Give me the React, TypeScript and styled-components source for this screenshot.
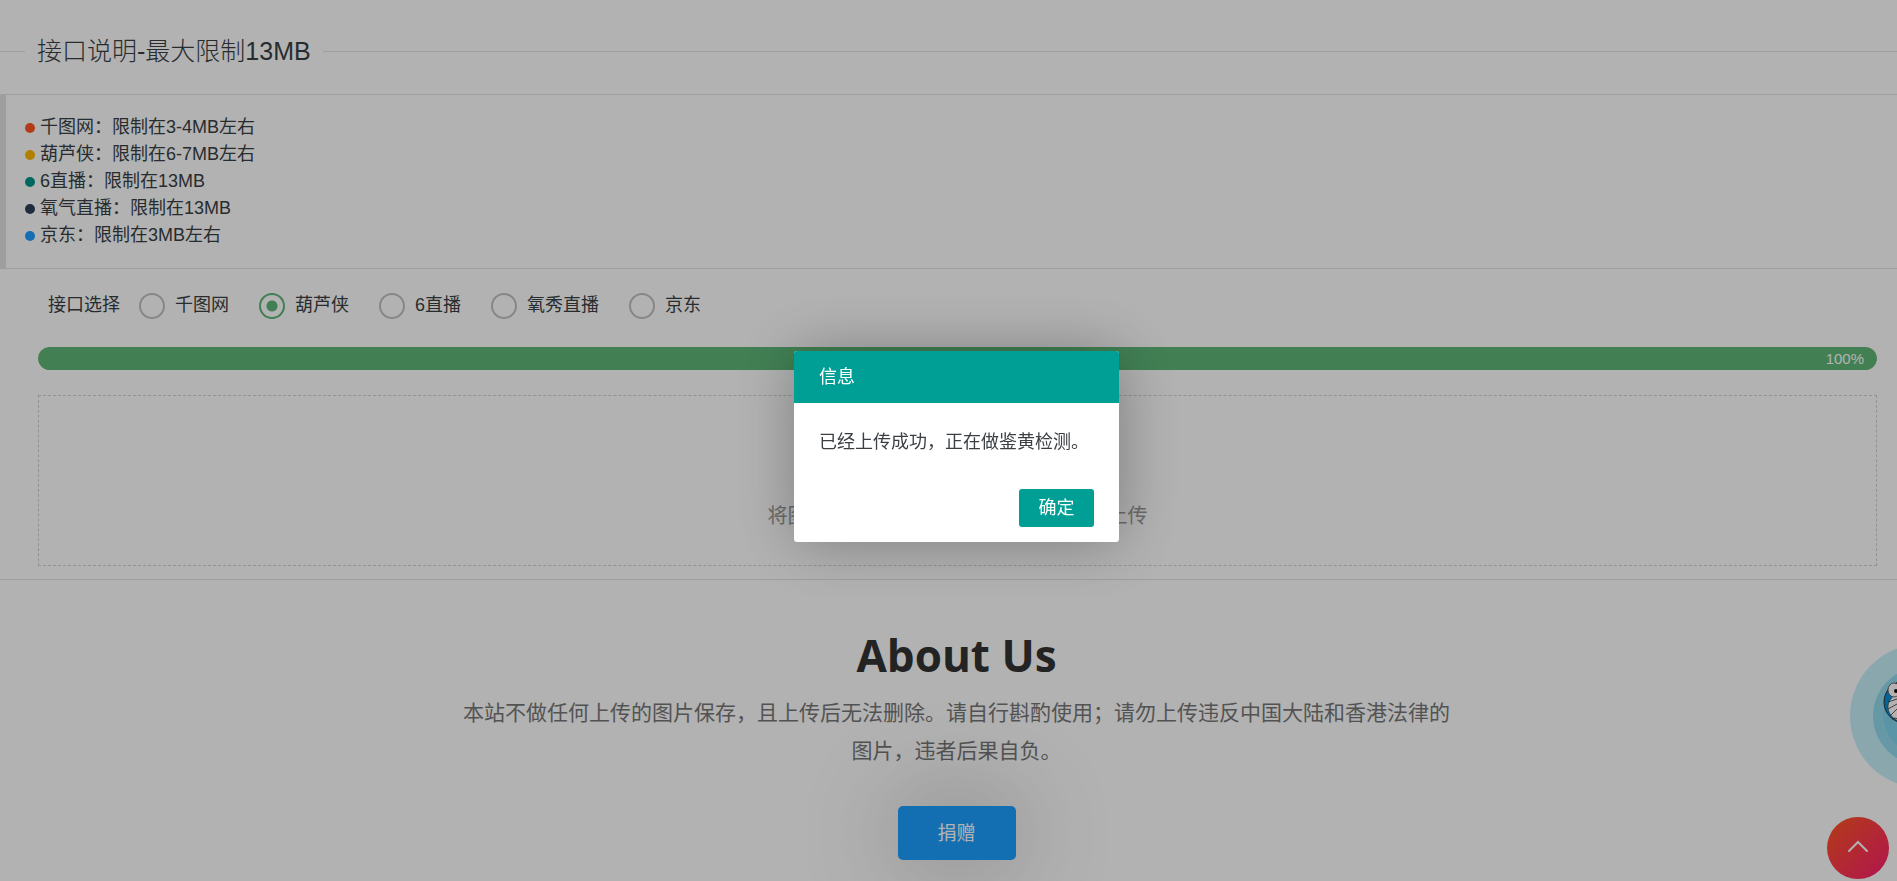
import React, { useState } from "react";
import styled, { createGlobalStyle } from "styled-components";
import { CloudUpload } from "lucide-react";

const sans = `"Liberation Sans", "Noto Sans CJK SC", sans-serif`;
const rich = `"Open Sans", "Noto Sans CJK SC", sans-serif`;
const line = "#e2e2e2";

const GlobalStyle = createGlobalStyle`
  *, *::before, *::after { box-sizing: border-box; }
  body {
    margin: 0;
    background: #fff;
    color: #3a3f44;
    font: 400 18px/27px ${sans};
    overflow: hidden;
  }
  h1, h2, p, ul { margin: 0; padding: 0; }
  button, input { font: inherit; margin: 0; }
`;

const Page = styled.main`
  position: relative;
  min-height: 100vh;
`;

const SectionTitle = styled.h1`
  display: flex;
  align-items: center;
  gap: 12px;
  height: 94px;
  padding-top: 8px;
  && {
    font-size: 25px;
    font-weight: 300;
  }
  line-height: 38px;
  white-space: nowrap;

  &::before, &::after {
    content: "";
    width: 25px;
    height: 1px;
    background: ${line};
  }
  &::after { flex: 1; }
`;

const Notes = styled.ul`
  list-style: none;
  border: 1px solid ${line};
  border-width: 1px 0 1px 6px;
  && { padding: 19px; }
`;

const Note = styled.li<{ $color: string }>`
  display: flex;
  align-items: center;
  gap: 5px;

  &::before {
    content: "";
    width: 10px;
    height: 10px;
    border-radius: 50%;
    background: ${(p) => p.$color};
  }
`;

const Form = styled.form`
  padding: 20px 20px 13px 38px;
  border-bottom: 1px solid ${line};
`;

const Choices = styled.div`
  display: flex;
  align-items: center;
  gap: 30px;
  height: 33px;
  margin-bottom: 25px;
  padding-left: 10px;
`;

const ChoicesLabel = styled.span`
  margin-right: -11px;
`;

const Choice = styled.label`
  display: flex;
  align-items: center;
  gap: 10px;
  cursor: pointer;
`;

const Radio = styled.input`
  appearance: none;
  width: 26px;
  height: 26px;
  border: 2px solid #c2c2c2;
  border-radius: 50%;
  cursor: pointer;

  &:checked {
    border-color: #5fb878;
    background: radial-gradient(circle, #5fb878 5px, transparent 6px);
  }
`;

const Progress = styled.div`
  height: 23px;
  margin-bottom: 25px;
  border-radius: 12px;
  background: ${line};
  overflow: hidden;
`;

const ProgressFill = styled.div`
  height: 100%;
  padding-right: 13px;
  border-radius: 12px;
  background: #5fb878;
  color: #fff;
  font-size: 15px;
  line-height: 23px;
  text-align: right;
`;

const DropZone = styled.button`
  display: flex;
  flex-direction: column;
  align-items: center;
  gap: 8px;
  width: 100%;
  padding: 37px 37px 36px;
  border: 1px dashed #d2d2d2;
  background: #fff;
  color: #999;
  font-size: 20px;
  line-height: 26px;
  cursor: pointer;

  svg { color: #009688; }
`;

const About = styled.section`
  display: flex;
  flex-direction: column;
  align-items: center;
  padding: 42px 20px 40px 36px;
  font-family: ${rich};
  text-align: center;
`;

const AboutTitle = styled.h2`
  color: #333;
  font-size: 44px;
  line-height: 66px;
`;

const AboutText = styled.p`
  && { margin: 5px 0 37px; }
  max-width: 1000px;
  color: #777;
  font-size: 21px;
  line-height: 38px;
`;

const Donate = styled.button`
  width: 118px;
  height: 54px;
  border: 0;
  border-radius: 5px;
  background: #1e9fff;
  box-shadow: 0 0 100px rgba(0, 0, 0, 0.3);
  color: #fff;
  font-size: 19px;
  cursor: pointer;
`;

const Mascot = styled.svg`
  position: fixed;
  right: -97px;
  bottom: 93px;
  width: 144px;
  height: 144px;
`;

const ToTop = styled.button`
  position: fixed;
  right: 8px;
  bottom: 2px;
  display: flex;
  align-items: center;
  justify-content: center;
  width: 62px;
  height: 62px;
  padding: 0 0 4px;
  border: 0;
  border-radius: 50%;
  background: linear-gradient(135deg, #ff5722, #ff1e70);
  cursor: pointer;
`;

const Shade = styled.div`
  position: fixed;
  inset: 0;
  display: flex;
  align-items: center;
  justify-content: center;
  padding: 12px 0 0 16px;
  background: rgba(0, 0, 0, 0.3);
`;

const Dialog = styled.div`
  width: 325px;
  border-radius: 3px;
  background: #fff;
  box-shadow: 1px 1px 62px rgba(0, 0, 0, 0.3);
  overflow: hidden;
`;

const DialogTitle = styled.h2`
  && {
    padding: 0 25px;
    font-size: 18px;
    font-weight: 400;
  }
  background: #009f95;
  color: #fff;
  line-height: 52px;
`;

const DialogText = styled.p`
  && { padding: 26px 25px 33px; }
  white-space: nowrap;
`;

const DialogActions = styled.div`
  display: flex;
  justify-content: flex-end;
  padding: 0 25px 15px;
`;

const Confirm = styled.button`
  width: 75px;
  height: 38px;
  padding: 0;
  border: 0;
  border-radius: 3px;
  background: #009f95;
  color: #fff;
  cursor: pointer;
`;

const notes = [
  { color: "#ff5722", text: "千图网：限制在3-4MB左右" },
  { color: "#ffb800", text: "葫芦侠：限制在6-7MB左右" },
  { color: "#009688", text: "6直播：限制在13MB" },
  { color: "#2f4056", text: "氧气直播：限制在13MB" },
  { color: "#1e9fff", text: "京东：限制在3MB左右" },
];

const sources = ["千图网", "葫芦侠", "6直播", "氧秀直播", "京东"];

export default function App() {
  const [source, setSource] = useState("葫芦侠");
  const [open, setOpen] = useState(true);
  const progress = 100;

  return (
    <Page>
      <GlobalStyle />
      <SectionTitle>接口说明-最大限制13MB</SectionTitle>
      <Notes>
        {notes.map((n) => (
          <Note key={n.text} $color={n.color}>{n.text}</Note>
        ))}
      </Notes>

      <Form>
        <Choices role="radiogroup" aria-labelledby="source-label">
          <ChoicesLabel id="source-label">接口选择</ChoicesLabel>
          {sources.map((s) => (
            <Choice key={s}>
              <Radio type="radio" name="source" checked={source === s} onChange={() => setSource(s)} />
              {s}
            </Choice>
          ))}
        </Choices>
        <Progress>
          <ProgressFill style={{ width: `${progress}%` }}>{progress}%</ProgressFill>
        </Progress>
        <DropZone type="button">
          <CloudUpload size={62} />
          将图片拖拽到此处，或者点击此处进行上传
        </DropZone>
      </Form>

      <About>
        <AboutTitle>About Us</AboutTitle>
        <AboutText>
          本站不做任何上传的图片保存，且上传后无法删除。请自行斟酌使用；请勿上传违反中国大陆和香港法律的图片，违者后果自负。
        </AboutText>
        <Donate type="button">捐赠</Donate>
      </About>

      <Mascot viewBox="0 0 144 144" aria-hidden="true">
        <circle cx="72" cy="72" r="72" fill="#c8f0fa" />
        <circle cx="72" cy="72" r="49" fill="#93daed" />
        <circle cx="75" cy="70" r="42" fill="#82d6f0" />
        <circle cx="55" cy="58" r="21" fill="#0a8fdc" stroke="#333" />
        <ellipse cx="58" cy="63" rx="20" ry="16" fill="#fff" stroke="#333" strokeWidth="0.5" />
        <ellipse cx="44" cy="46" rx="6" ry="7" fill="#fff" stroke="#333" strokeWidth="0.7" />
        <circle cx="46" cy="47" r="2" fill="#111" />
        <g fill="none" stroke="#333" strokeWidth="0.8">
          <path d="M38 58l9-3M38 65l9-5M41 71l6-6M42 75q3-2 6 0" />
        </g>
      </Mascot>

      <ToTop type="button" aria-label="返回顶部">
        <svg width="20" height="12" viewBox="0 0 20 12" fill="none" stroke="#fff" strokeWidth="2" strokeLinecap="round">
          <path d="M1 11 10 2l9 9" />
        </svg>
      </ToTop>

      {open && (
        <Shade>
          <Dialog role="dialog" aria-modal="true" aria-labelledby="dialog-title">
            <DialogTitle id="dialog-title">信息</DialogTitle>
            <DialogText>已经上传成功，正在做鉴黄检测。</DialogText>
            <DialogActions>
              <Confirm type="button" onClick={() => setOpen(false)}>确定</Confirm>
            </DialogActions>
          </Dialog>
        </Shade>
      )}
    </Page>
  );
}
